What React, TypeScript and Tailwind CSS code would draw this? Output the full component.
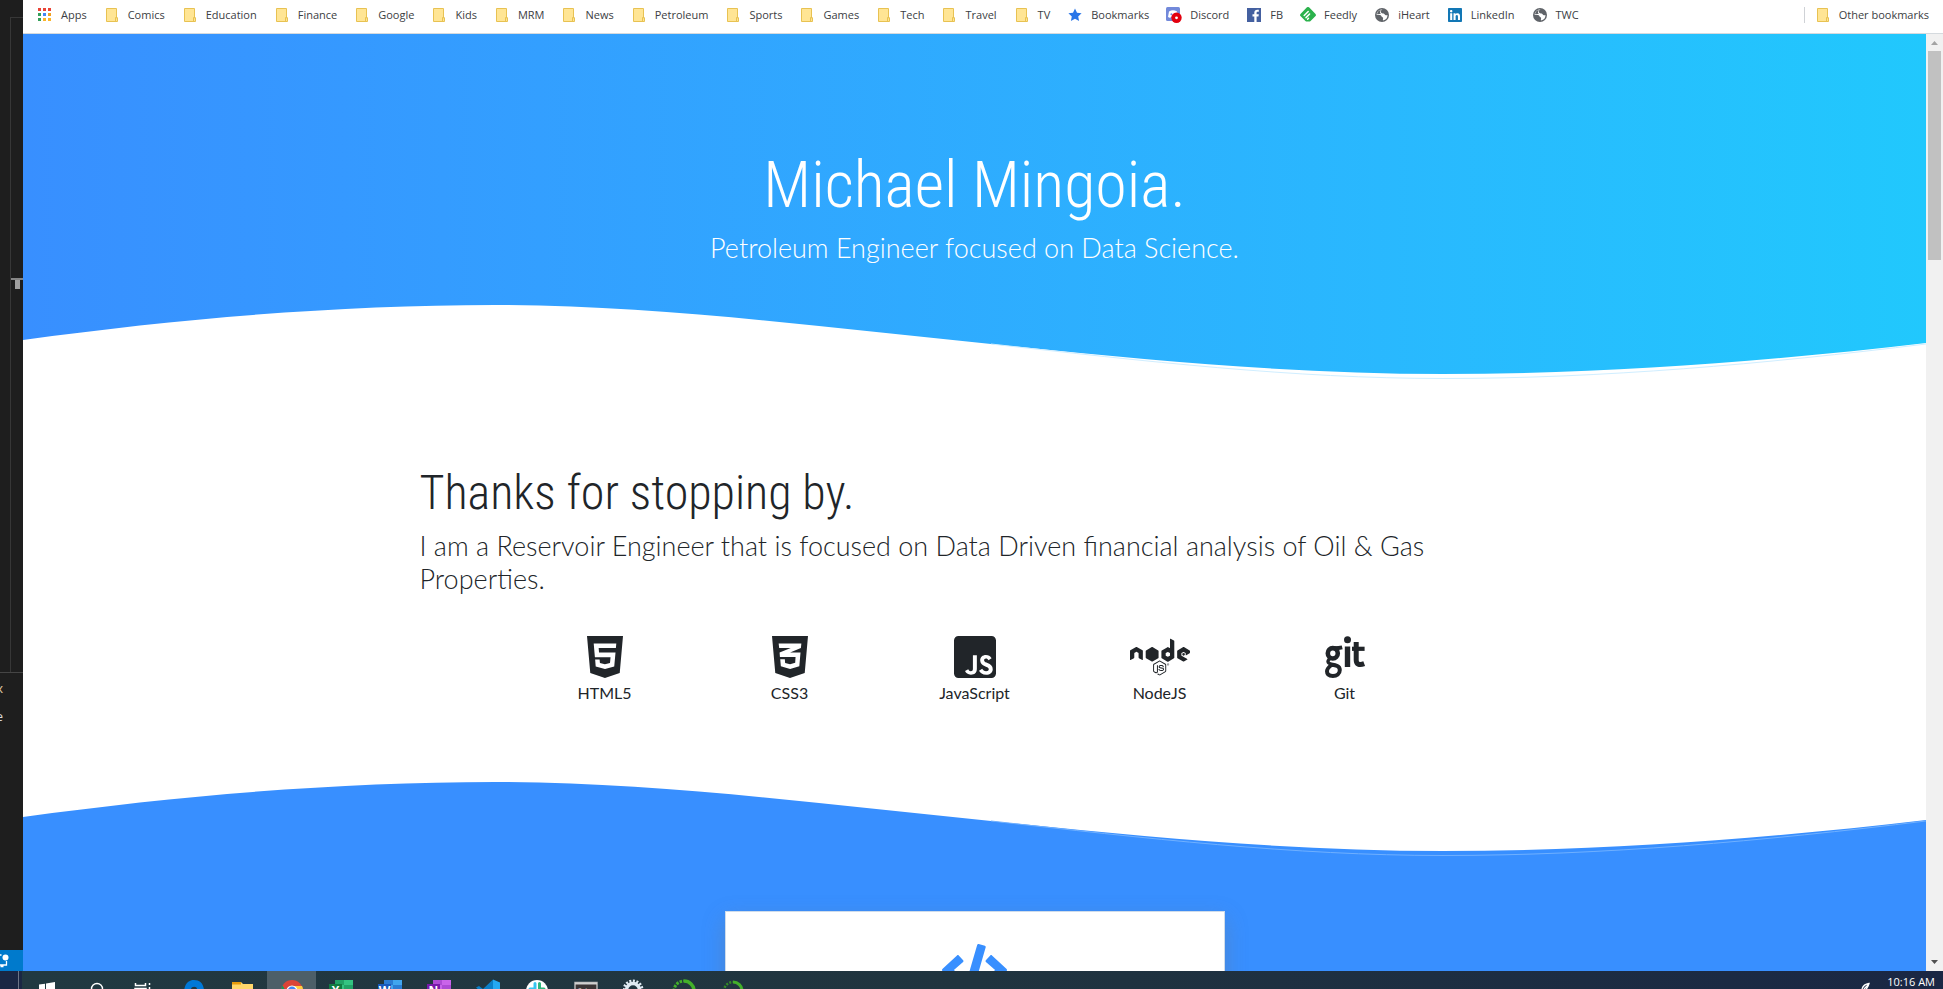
import type { ReactNode } from "react";
import { FaCode, FaCss3Alt, FaHtml5, FaJsSquare, FaLinkedin, FaNode } from "react-icons/fa";

/* ---------- bookmark icons ---------- */

function AppsIcon() {
  const colors = ["#ea4335", "#ea4335", "#ea4335", "#34a05a", "#4285f4", "#f0a020", "#34a05a", "#fbb42a", "#fbb42a"];
  return (
    <svg viewBox="0 0 16 16" className="size-4">
      {colors.map((c, i) => (
        <rect key={i} x={1 + (i % 3) * 5} y={1 + Math.floor(i / 3) * 5} width="3" height="3" fill={c} />
      ))}
    </svg>
  );
}

function FolderIcon() {
  return (
    <svg viewBox="0 0 16 16" className="size-4">
      <path d="M2.5 1.5h10v9.5h1v3.5h-11z" fill="#ffe594" stroke="#e8c252" />
      <path d="M11.5 14v-3.5h2" fill="none" stroke="#e8c252" />
    </svg>
  );
}

function StarIcon() {
  return (
    <svg viewBox="0 0 16 16" className="size-4">
      <path d="M8 1.500l2 4.200 4.600.6-3.400 3.100.9 4.600L8 11.800 3.900 14l.9-4.600L1.400 6.300 6 5.700z" fill="#2a76e8" />
    </svg>
  );
}

function DiscordIcon() {
  return (
    <svg viewBox="0 0 16 16" className="size-4 overflow-visible">
      <rect width="14" height="14" rx="1.5" fill="#7289da" />
      <path d="M3 4.600Q7 2 11 4.600L12 10l-2.200 1-.8-1.200H5L4.200 11 2 10z" fill="#fff" />
      <circle cx="5.400" cy="7.300" r="1" fill="#7289da" />
      <circle cx="8.800" cy="7.300" r="1" fill="#7289da" />
      <circle cx="10.500" cy="10.800" r="5.200" fill="#e3000f" />
      <circle cx="10.500" cy="10.800" r="1.400" fill="#fff" />
    </svg>
  );
}

function FacebookIcon() {
  return (
    <svg viewBox="0 0 16 16" className="size-4">
      <rect x="1" y="1" width="14" height="14" fill="#4460a0" />
      <path d="M8.300 15V9.500H6.500V7.300h1.800V5.700c0-2 1.200-3 3-3h1.500v2.100h-1.100c-.9 0-1.100.4-1.100 1.100v1.400h2.200l-.3 2.200h-1.900V15z" fill="#fff" />
    </svg>
  );
}

function FeedlyIcon() {
  return (
    <svg viewBox="0 0 16 16" className="size-4">
      <path d="M6.700.6a1.800 1.800 0 0 1 2.600 0l6 6.100a1.800 1.800 0 0 1 0 2.600L10.600 14a2 2 0 0 1-1.400.6H6.800a2 2 0 0 1-1.400-.6L.7 9.300a1.800 1.800 0 0 1 0-2.600z" fill="#2bb24c" />
      <path d="M4.200 8.500L8.200 4.500M6 10.600l3.600-3.600M7.600 12.200l.9-.9" stroke="#fff" strokeWidth="1.500" strokeLinecap="round" />
    </svg>
  );
}

function GlobeIcon() {
  return (
    <svg viewBox="0 0 16 16" className="size-4">
      <circle cx="8" cy="8" r="7" fill="#5f6368" />
      <path d="M8.800 2.600C6.400 3.200 6 5.600 8 6.200c1.500.4 2.200 0 2.800 1.400.5 1 1.500.6 2.700.4a5.500 5.500 0 0 1-4.500 5.400c-.4-1 .4-1.600 0-2.600-.5-1-1.600-.8-1.800-2-.1-.9-2-.8-4.700-1a5.600 5.600 0 0 1 6.300-5.200z" fill="#fff" fillRule="evenodd" />
      <path d="M3 7C3.400 4.600 5.200 3 7.200 2.700 5.600 4 5.600 6 7 7z" fill="#5f6368" />
    </svg>
  );
}

function LinkedInIcon() {
  return <FaLinkedin className="size-4 text-[#1277b5]" />;
}

type Bookmark = { label: string; icon: ReactNode };

const folder = (label: string): Bookmark => ({ label, icon: <FolderIcon /> });

const bookmarks: Bookmark[] = [
  { label: "Apps", icon: <AppsIcon /> },
  ...["Comics", "Education", "Finance", "Google", "Kids", "MRM", "News", "Petroleum", "Sports", "Games", "Tech", "Travel", "TV"].map(folder),
  { label: "Bookmarks", icon: <StarIcon /> },
  { label: "Discord", icon: <DiscordIcon /> },
  { label: "FB", icon: <FacebookIcon /> },
  { label: "Feedly", icon: <FeedlyIcon /> },
  { label: "iHeart", icon: <GlobeIcon /> },
  { label: "LinkedIn", icon: <LinkedInIcon /> },
  { label: "TWC", icon: <GlobeIcon /> },
];

function BookmarkLink({ label, icon }: Bookmark) {
  return (
    <a href="#" className="flex shrink-0 items-center gap-2 whitespace-nowrap">
      {icon}
      {label}
    </a>
  );
}

function BookmarksBar() {
  return (
    <nav className="flex h-[34px] shrink-0 items-center justify-between border-b border-[#d5dade] bg-white px-3.5 pb-[3px] font-['Open_Sans',sans-serif] text-[11px] text-[#3c4043]">
      <div className="flex items-center gap-[17px]">
        {bookmarks.map((b) => (
          <BookmarkLink key={b.label} {...b} />
        ))}
      </div>
      <div className="flex items-center gap-2.5">
        <span className="h-4 w-px bg-[#cfd2d6]" />
        <BookmarkLink label="Other bookmarks" icon={<FolderIcon />} />
      </div>
    </nav>
  );
}

/* ---------- page ---------- */

const crest = "M0 40C160 18 320 5 472 5C630 5 800 27 968 44";

function Wave({ fill, line }: { fill: string; line: string }) {
  return (
    <svg viewBox="0 0 1903 85" className={`block h-auto w-full ${fill}`}>
      <path d={`${crest}C1120 60 1270 74 1420 74C1580 74 1740 62 1903 43V86H0Z`} />
      <path d="M968 44C1120 61 1270 78.500 1420 78.500C1580 78.500 1740 64 1903 44" fill="none" className={line} />
    </svg>
  );
}

function GitLogo({ className }: { className?: string }) {
  return (
    <svg viewBox="0 -3 40 48" className={className} fill="none" stroke="currentColor">
      <ellipse cx="7.800" cy="17.300" rx="5" ry="5.200" strokeWidth="4.600" />
      <path d="M9 12.200c3 0 5 0 8.200-.8" strokeWidth="3.800" />
      <path d="M5 22.500c-3 2.200-2.600 4.800 1 5.600" strokeWidth="3.400" />
      <path d="M5.500 28.400c5 .8 9.300 1.200 9.300 5.700 0 3.900-3 5.900-6.900 5.900s-5.900-1.700-5.900-4.700c0-2.800 2-4.500 4.500-6.300" strokeWidth="4" />
      <circle cx="22.500" cy="3.700" r="3.500" fill="currentColor" stroke="none" />
      <path d="M22.500 10.500V31" strokeWidth="5.400" />
      <path d="M31.200 6v18c0 4.200 3 5.600 8 3.700" strokeWidth="5" />
      <path d="M27 12.800h12.600" strokeWidth="4.200" />
    </svg>
  );
}

const skills = [
  { label: "HTML5", Icon: FaHtml5 },
  { label: "CSS3", Icon: FaCss3Alt },
  { label: "JavaScript", Icon: FaJsSquare },
  { label: "NodeJS", Icon: FaNode },
  { label: "Git", Icon: GitLogo },
];

function Page() {
  return (
    <main className="min-w-0 flex-1 overflow-hidden bg-[#388fff] font-['Lato',sans-serif] text-[#212529]">
      <header className="bg-linear-to-r from-[#388fff] to-[#21c8fd] pt-[113px] text-center text-white">
        <h1 className="mb-[7px] font-['Roboto_Condensed',sans-serif] text-[64px] leading-[77px] font-light">Michael Mingoia.</h1>
        <p className="mb-[35px] text-[27px] leading-[34px] font-light">Petroleum Engineer focused on Data Science.</p>
        <Wave fill="fill-white" line="stroke-[#d0eeff]" />
      </header>
      <section className="bg-white pt-[79px]">
        <div className="mx-auto max-w-[1140px] px-[15px]">
          <h2 className="mb-2 font-['Roboto_Condensed',sans-serif] text-[48px] leading-[57px] font-light">Thanks for stopping by.</h2>
          <p className="mb-[36px] text-[27px] leading-[33px] font-light">
            I am a Reservoir Engineer that is focused on Data Driven financial analysis of Oil &amp; Gas Properties.
          </p>
          <ul className="flex justify-center pt-[2px] pb-[72px]">
            {skills.map(({ label, Icon }) => (
              <li key={label} className="flex w-1/6 flex-col items-center text-[16px] leading-[24px] font-normal">
                <Icon className="h-12 w-[60px]" />
                {label}
              </li>
            ))}
          </ul>
        </div>
        <Wave fill="fill-[#388fff]" line="stroke-[#6fb0ff]" />
      </section>
      <section className="flex justify-center pt-[49px]">
        <article className="flex h-[300px] w-[500px] justify-center border border-[#cfdcea] bg-white pt-[32px] shadow-[0_8px_20px_rgba(120,120,120,0.35)]">
          <FaCode className="h-[52px] w-[65px] text-[#388fff]" />
        </article>
      </section>
    </main>
  );
}

function Scrollbar() {
  return (
    <div className="flex w-[17px] shrink-0 flex-col items-center bg-[#f1f1f1]">
      <svg viewBox="0 0 17 17" className="size-[17px] shrink-0">
        <path d="M5 11h7L8.500 7z" fill="#a3a3a3" />
      </svg>
      <div className="h-[209px] w-[13px] bg-[#c1c1c1]" />
      <svg viewBox="0 0 17 17" className="mt-auto size-[17px] shrink-0">
        <path d="M5 6h7L8.500 10z" fill="#505050" />
      </svg>
    </div>
  );
}

/* ---------- editor sliver on the left ---------- */

function EditorEdge() {
  return (
    <aside className="flex w-[23px] shrink-0 flex-col overflow-hidden bg-[#1e1e1e] pt-[17px] font-['Open_Sans',sans-serif] text-[13px]">
      <div className="ml-[10px] flex-1 border-t border-l border-[#373737] pt-[260px]">
        <div className="h-[2px] bg-[#858585]" />
        <div className="ml-1 h-[9px] w-[5px] bg-[#a0a0a0]" />
      </div>
      <div className="h-[278px] border-t border-[#454545] pt-1.5">
        <div className="flex w-[3px] justify-end leading-[18px] text-[#e0c9a6]">x</div>
        <div className="mt-[9px] flex w-[3px] justify-end leading-[20px] text-[#d8d8d8]">e</div>
      </div>
      <div className="h-[21px] bg-[#007acc]">
        <svg viewBox="0 0 23 21" className="h-[21px] w-[23px]">
          <circle cx="5.500" cy="7.500" r="3" fill="#fff" />
          <path d="M0 5h1.500M6.500 11v4H0M.5 16.500h3" fill="none" stroke="#fff" strokeWidth="1.300" />
        </svg>
      </div>
    </aside>
  );
}

/* ---------- taskbar ---------- */

function OfficeIcon({ back, mid, front, letter }: { back: string; mid: string; front: string; letter: string }) {
  return (
    <>
      <rect x="6" y="1" width="18" height="22" fill={back} />
      <path d="M6 1h9v5H6zM15 6h9v6h-9z" fill={mid} />
      <rect x="0" y="5" width="13" height="14" fill={front} />
      <text x="6.500" y="16" textAnchor="middle" fontSize="12" fontWeight="700" fontFamily="Open Sans, sans-serif" fill="#fff">
        {letter}
      </text>
    </>
  );
}

const taskItems: { name: string; active?: boolean; art: ReactNode }[] = [
  { name: "Start", art: <path d="M4 5.500l6-.8V12H4zM11 4.500l9-1.500v9h-9zM4 13h6v7H4zM11 13h9v8h-9z" fill="#fff" /> },
  { name: "Search", art: <circle cx="13" cy="10" r="5.500" fill="none" stroke="#fff" strokeWidth="1.400" /> },
  { name: "Task view", art: <path d="M2.500 4v2.500h10V4M2 9.500h11v9H2zM16.500 4v2M16.500 8v10" fill="none" stroke="#fff" strokeWidth="1.500" /> },
  {
    name: "Edge",
    art: (
      <>
        <path d="M2 12C3 4 7 1 12 1c6 0 10 4 10 11v2H9c0 4 6 6 12 3v4C8 26 3 17 8 10c-3 1-5 3-6 5z" fill="#0078d7" />
        <path d="M9 10c.5-3 6-3 6 0z" fill="#213640" />
      </>
    ),
  },
  {
    name: "Explorer",
    art: (
      <>
        <path d="M1 3h9l2 2h10v15H1z" fill="#ffd76a" />
        <path d="M1 3h9v2.500H1z" fill="#e59b0c" />
      </>
    ),
  },
  {
    name: "Chrome",
    active: true,
    art: (
      <>
        <circle cx="12" cy="12" r="11" fill="#db4437" />
        <path d="M2.500 6.500L9 17l-1 5A11 11 0 0 1 2.500 6.500z" fill="#0f9d58" />
        <path d="M12 7h10a11 11 0 0 1-8 16z" fill="#ffcd40" />
        <circle cx="12" cy="12" r="5" fill="#4285f4" stroke="#fff" strokeWidth="1.200" />
      </>
    ),
  },
  { name: "Excel", art: <OfficeIcon back="#33c481" mid="#21a366" front="#107c41" letter="X" /> },
  { name: "Word", art: <OfficeIcon back="#41a5ee" mid="#2b7cd3" front="#185abd" letter="W" /> },
  { name: "OneNote", art: <OfficeIcon back="#ca64ea" mid="#ae4bd5" front="#7719aa" letter="N" /> },
  {
    name: "Code",
    art: (
      <>
        <path d="M17 .5L7 10 3 7 0 8.500 4 12l13 11z" fill="#0a7fc8" />
        <path d="M17 .5L24 3.500v17L17 23z" fill="#23a8f2" />
      </>
    ),
  },
  {
    name: "Slack",
    art: (
      <>
        <circle cx="12" cy="12" r="11" fill="#fff" />
        <path d="M10 4.500v5M5 10h5" stroke="#36c5f0" strokeWidth="3" strokeLinecap="round" />
        <path d="M14.500 4.500v5M15 10h4" stroke="#2eb67d" strokeWidth="3" strokeLinecap="round" />
      </>
    ),
  },
  {
    name: "Terminal",
    art: (
      <>
        <rect x="1" y="3.500" width="22" height="18" fill="#3b3536" stroke="#b5b5b5" strokeWidth="1.500" />
        <path d="M1 4.500h22" stroke="#d0d0d0" strokeWidth="2" />
        <text x="4" y="13" fontSize="6" fontFamily="Liberation Mono, monospace" fill="#ddd">
          C:\
        </text>
      </>
    ),
  },
  {
    name: "Settings",
    art: (
      <>
        <circle cx="10" cy="11" r="9" fill="none" stroke="#dfeaf2" strokeWidth="3" strokeDasharray="2 1.500" />
        <circle cx="10" cy="11" r="6.500" fill="none" stroke="#dfeaf2" strokeWidth="3.500" />
      </>
    ),
  },
  {
    name: "Anaconda",
    art: (
      <>
        <path d="M12 2a10 10 0 0 1 10 10" fill="none" stroke="#43b02a" strokeWidth="3.500" />
        <path d="M2 12A10 10 0 0 1 12 2" fill="none" stroke="#43b02a" strokeWidth="3" strokeDasharray="2.500 1.200" />
      </>
    ),
  },
  {
    name: "Spyder",
    art: (
      <>
        <path d="M12 3a9 9 0 0 1 9 9" fill="none" stroke="#43b02a" strokeWidth="3" />
        <path d="M3 12A9 9 0 0 1 12 3" fill="none" stroke="#348c26" strokeWidth="2.500" strokeDasharray="2 1.400" />
      </>
    ),
  },
];

function Taskbar() {
  return (
    <footer className="flex h-[18px] shrink-0 items-start overflow-hidden bg-linear-to-r from-[#213941] via-[#20343f] to-[#1a2744]">
      <div className="h-full w-[22px] shrink-0 bg-[#1a2744] pl-[18px]">
        <div className="h-full w-px bg-[#6d7688]" />
      </div>
      {taskItems.map(({ name, active, art }) => (
        <button
          key={name}
          type="button"
          aria-label={name}
          className={`flex h-full w-[49px] shrink-0 justify-center overflow-hidden pt-2 ${active ? "bg-[#4d5f68]" : ""}`}
        >
          <svg viewBox="0 0 24 24" className="size-6 shrink-0">
            {art}
          </svg>
        </button>
      ))}
      <div className="ml-auto flex gap-4 pr-2 font-['Open_Sans',sans-serif] text-[11px] leading-[22px] text-white">
        <svg viewBox="0 0 10 18" className="h-[18px] w-[10px]">
          <path d="M1 18c1-3 3-5 7-5.500-.5 2-1.500 4-3 6M3 18l4-4" fill="none" stroke="#fff" strokeWidth="1.300" />
        </svg>
        <time>10:16 AM</time>
      </div>
    </footer>
  );
}

export default function App() {
  return (
    <div className="flex h-screen flex-col overflow-hidden">
      <div className="flex min-h-0 flex-1">
        <EditorEdge />
        <div className="flex min-w-0 flex-1 flex-col">
          <BookmarksBar />
          <div className="flex min-h-0 flex-1">
            <Page />
            <Scrollbar />
          </div>
        </div>
      </div>
      <Taskbar />
    </div>
  );
}
